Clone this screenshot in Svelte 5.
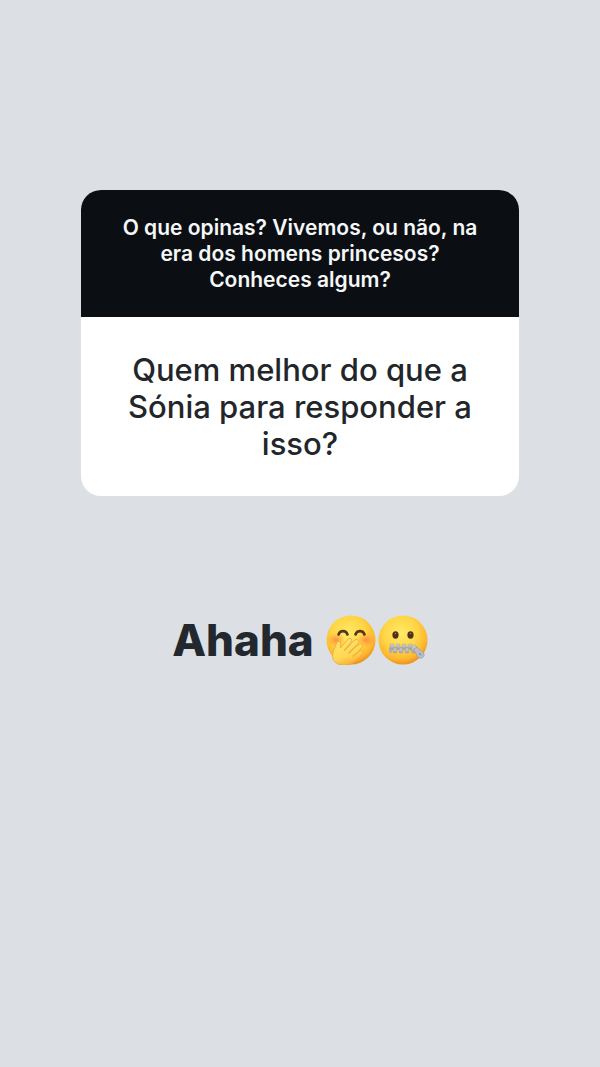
<script>
  const question = 'O que opinas? Vivemos, ou não, na era dos homens princesos? Conheces algum?';
  const answer = 'Quem melhor do que a Sónia para responder a isso?';
  const upperTeeth = [12, 18, 24, 30];
  const lowerTeeth = [15, 21, 27];
</script>

<main class="story">
  <section class="card">
    <h1 class="question">{question}</h1>
    <p class="answer">{answer}</p>
  </section>

  <div class="reply">
    <span class="word">Ahaha</span>
    <span class="faces">
      <svg class="face" viewBox="0 0 50 50" role="img" aria-label="Cara com a mão sobre a boca">
        <defs>
          <radialGradient id="skin" cx="45%" cy="36%" r="64%">
            <stop offset="0" stop-color="#ffea68" />
            <stop offset="0.55" stop-color="#ffd544" />
            <stop offset="0.85" stop-color="#fdb52d" />
            <stop offset="1" stop-color="#ec9124" />
          </radialGradient>
          <radialGradient id="blush">
            <stop offset="0" stop-color="#ff7541" stop-opacity="0.75" />
            <stop offset="1" stop-color="#ff8c3c" stop-opacity="0" />
          </radialGradient>
          <linearGradient id="hand" x1="0.2" y1="0" x2="0.6" y2="1">
            <stop offset="0" stop-color="#ffe36a" />
            <stop offset="0.65" stop-color="#ffd854" />
            <stop offset="1" stop-color="#f6ab31" />
          </linearGradient>
        </defs>
        <circle cx="25" cy="25" r="24.5" fill="url(#skin)" />
        <ellipse cx="10" cy="25" rx="9" ry="7" fill="url(#blush)" />
        <ellipse cx="40" cy="25" rx="9" ry="7" fill="url(#blush)" />
        <path d="M12.500 19.500c1.500-4.500 7.500-4.500 9 0M29.500 19.500c1.500-4.500 7.500-4.500 9 0" fill="none" stroke="#59331b" stroke-width="2.600" stroke-linecap="round" />
        <path
          d="M7.500 45C5.500 40.500 7 36 9 32.500L10.500 28c.8-2.400 4.500-2 4.300.8l-.2 4 7.200-8.500c2-2.200 5 .1 3.500 2.600L23.300 30l5.700-5c2.400-1.700 5.100.9 3.200 3.200l-4.400 5.100 5.200-4c2.300-1.500 4.600 1 2.900 3.100l-4.600 5.300 2.800-1.800c2.300-1.100 3.900 1.300 2.200 3.200-3.500 4.200-7 8.400-12.300 10.300C17.500 51.500 10.500 50 7.500 45Z"
          fill="url(#hand)" stroke="#eda238" stroke-width="0.8" stroke-linejoin="round" />
        <path d="M23.300 30l-5 5.300M27.800 33.300l-5 4.700M31.300 37.600l-4.500 3.500" fill="none" stroke="#f0a63a" stroke-width="1.200" stroke-linecap="round" />
      </svg>
      <svg class="face" viewBox="0 0 50 50" role="img" aria-label="Cara com fecho na boca">
        <defs>
          <linearGradient id="metal" x1="0" y1="0" x2="0" y2="1">
            <stop offset="0" stop-color="#d2d2d5" />
            <stop offset="1" stop-color="#a3a3aa" />
          </linearGradient>
        </defs>
        <circle cx="25" cy="25" r="24.5" fill="url(#skin)" />
        <ellipse cx="17.500" cy="20" rx="3.100" ry="3.700" fill="#50301b" />
        <ellipse cx="32.500" cy="20" rx="3.100" ry="3.700" fill="#50301b" />
        <circle cx="17.500" cy="18.500" r="0.8" fill="#a37750" />
        <circle cx="32.500" cy="18.500" r="0.8" fill="#a37750" />
        <path d="M12.500 33.500h24" stroke="#a19c99" stroke-width="2.500" stroke-linecap="round" />
        {#each upperTeeth as x}
          <path d="M{x} 30.500q0-1.500 1-1.500h2q1 0 1 1.500v2l-1 1.500h-2l-1-1.500z" fill="url(#metal)" stroke="#9f9c9e" stroke-width="0.5" />
        {/each}
        {#each lowerTeeth as x}
          <path d="M{x} 36.500v-2l1-1.500h2l1 1.500v2q0 1.500-1 1.500h-2q-1 0-1-1.500z" fill="url(#metal)" stroke="#9f9c9e" stroke-width="0.5" />
        {/each}
        <rect x="11" y="34" width="3" height="4" rx="1" fill="#b0aeb2" />
        <rect x="33.500" y="30" width="5" height="8" rx="2" fill="url(#metal)" stroke="#96959b" stroke-width="0.5" />
        <path d="M36 34l3-2c1.300 2 3.800 2.800 5.600 4.500 1.700 1.700 2.200 4.300.6 5.800-1.700 1.600-4.300 1-5.700-.8-1.500-1.900-1.500-4.500-3.500-5.500z" fill="#bcbdc4" stroke="#94969f" stroke-width="0.6" />
        <path d="M41.500 38.500l1.200 1.200" stroke="#92949d" stroke-width="1.400" stroke-linecap="round" />
      </svg>
    </span>
  </div>
</main>

<style>
  :global(body) {
    margin: 0;
    background: #dce0e5;
  }

  .story {
    box-sizing: border-box;
    min-height: 100vh;
    padding: 190px 81px 64px;
    font-family: Inter, "Noto Sans", sans-serif;
    text-align: center;
  }

  .card {
    overflow: hidden;
    border-radius: 20px;
    background: #fff;
  }

  .question {
    margin: 0;
    padding: 25px 36px 24px;
    background: #0b0f13;
    color: #f5f7f8;
    font-size: 21px;
    font-weight: 600;
    line-height: 26px;
  }

  .answer {
    margin: 0;
    padding: 34px 36px;
    color: #22262a;
    font-size: 31px;
    font-weight: 500;
    line-height: 37px;
  }

  .reply {
    display: flex;
    align-items: center;
    justify-content: center;
    gap: 12px;
    margin-top: 116px;
    color: #23282e;
    font-size: 44px;
    font-weight: 800;
    line-height: 56px;
  }

  .faces {
    display: flex;
    gap: 2px;
  }

  .face {
    width: 50px;
    height: 50px;
  }
</style>
